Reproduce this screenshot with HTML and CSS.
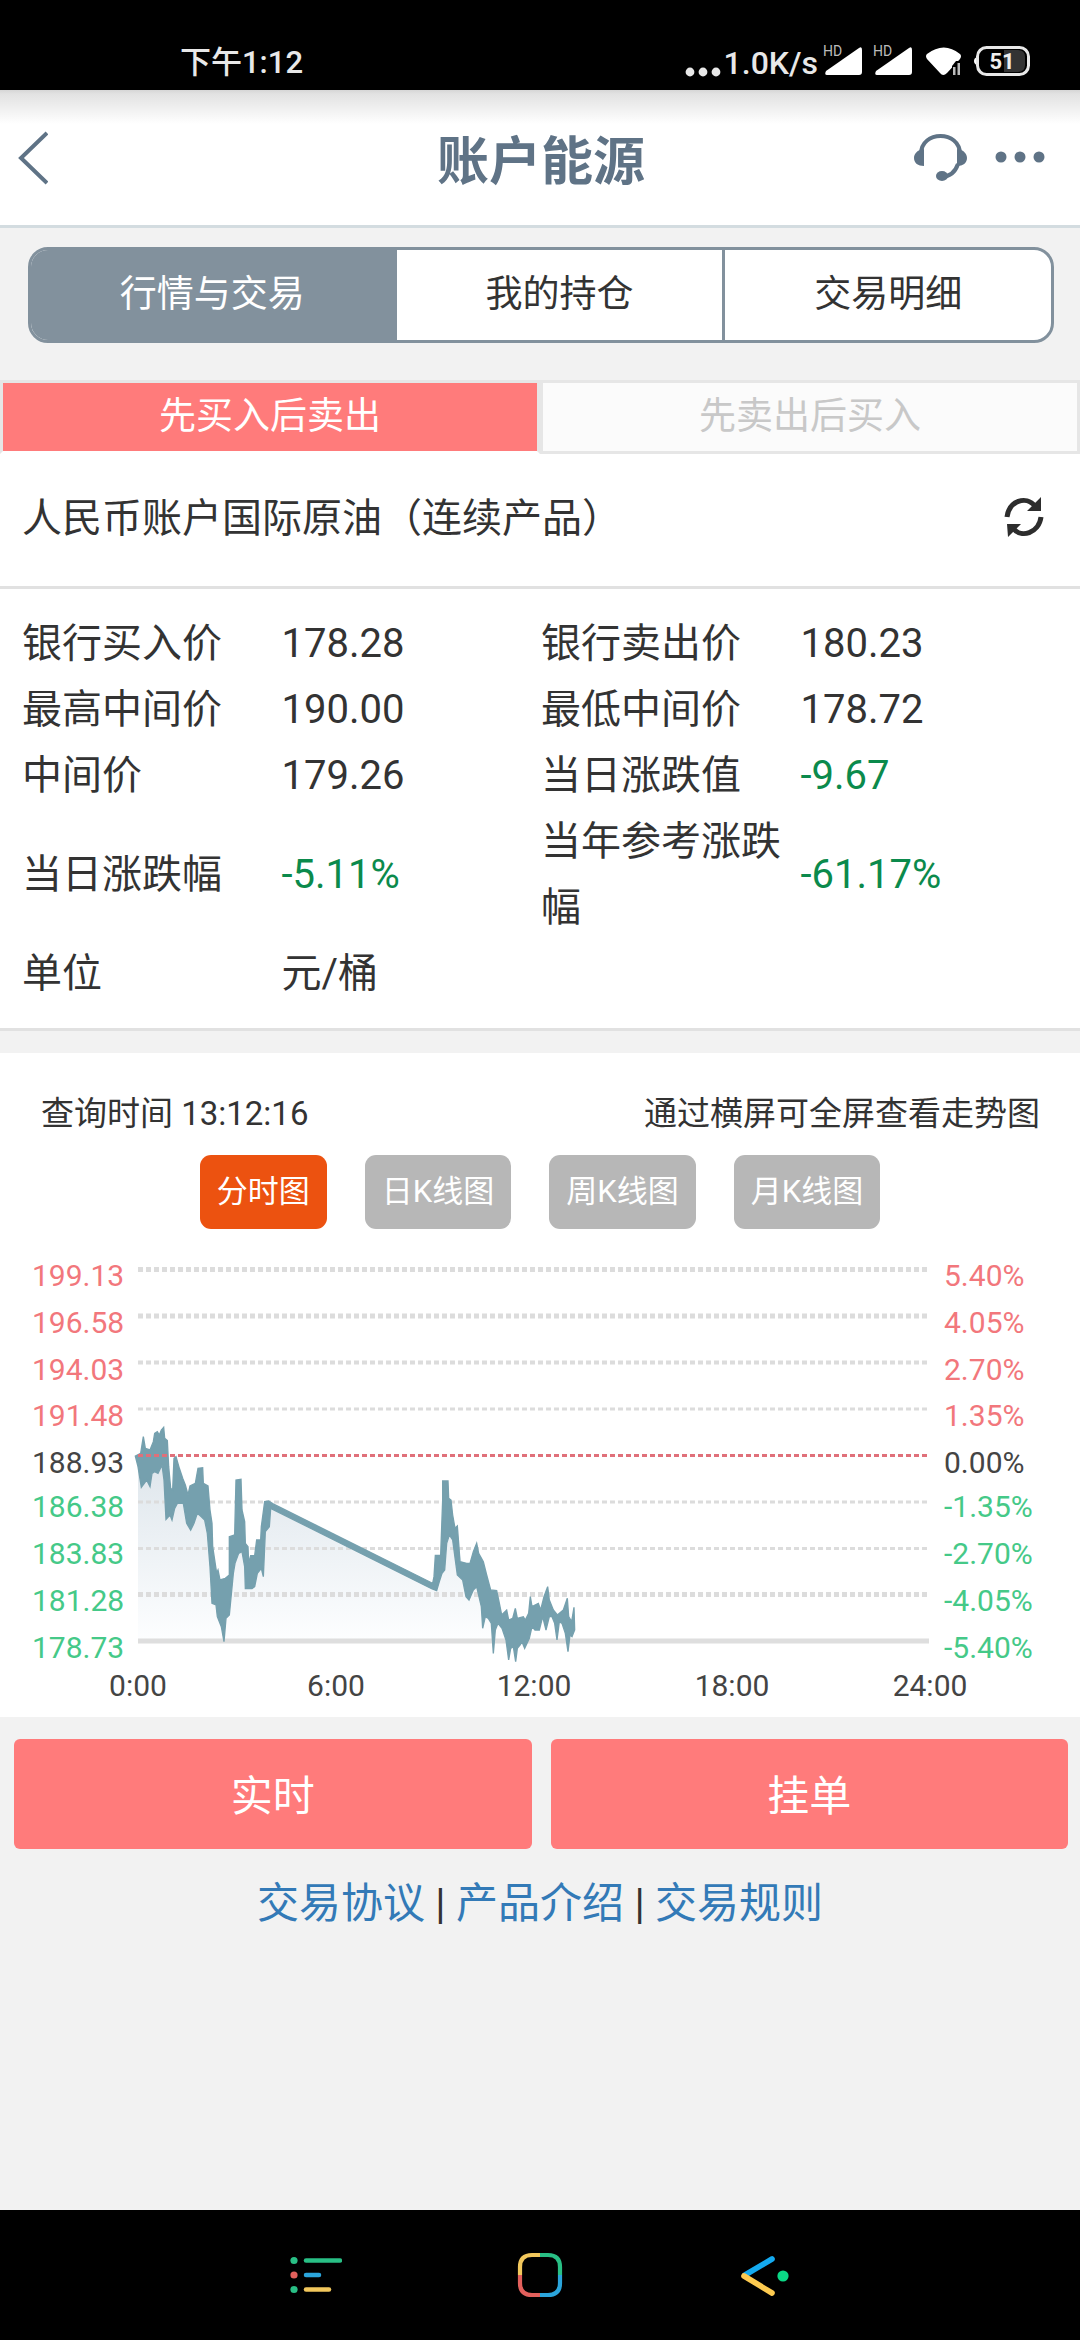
FILE: index.html
```html
<!DOCTYPE html>
<html lang="zh-CN">
<head>
<meta charset="utf-8">
<meta name="viewport" content="width=device-width, initial-scale=1">
<title>账户能源</title>
<link rel="stylesheet" href="styles.css">
</head>
<body>
<div class="status-bar">
  <span class="clock">下午1:12</span>
  <div class="status-right">
    <svg class="net-dots" width="28" height="40" viewBox="0 0 28 40"><circle cx="5" cy="32" r="4.4"/><circle cx="18" cy="32" r="4.4"/><circle cx="31" cy="32" r="4.4"/></svg>
    <span class="speed">1.0K/s</span>
    <svg class="status-icons" width="208" height="40" viewBox="822 40 208 40">
      <text x="822" y="56" class="hd">HD</text>
      <path d="M826 75h32q3 0 3-3V50q0-4-3-2L825 71q-2 4 1 4z"/>
      <text x="872" y="56" class="hd">HD</text>
      <path d="M876 75h32q3 0 3-3V50q0-4-3-2L875 71q-2 4 1 4z"/>
      <path d="M926 54q17-13 33 0q2 2 0 5L946 73q-4 4-7 0L926 59q-2-3 0-5z"/>
      <path d="M951 66l4-5h5v15h-9z" class="cut"/>
      <path d="M952 67h2.500v8h-2.500zM956.500 63h2.500v12h-2.500z" class="dim"/>
      <path d="M976 57q-3 1-3 4t3 4z"/>
      <rect x="976.500" y="47.500" width="51" height="27" rx="9" class="battery"/>
      <path d="M1003 50h14q7 0 7 7v8q0 7-7 7h-14z" class="charge"/>
      <text x="1001" y="69" class="level" text-anchor="middle">51</text>
    </svg>
  </div>
</div>

<header class="app-header">
  <button class="icon-button" aria-label="返回"><svg width="48" height="60" viewBox="0 0 48 60"><path d="M47 5L21 30l26 25"/></svg></button>
  <h1>账户能源</h1>
  <div class="header-tools">
    <button class="icon-button" aria-label="客服"><svg width="56" height="52" viewBox="910 134 56 52">
      <path class="band" d="M919 156c0-24 39-24 39 0M956 166q-4 12-16 13"/>
      <path class="solid" d="M922 151v17c-6 0-10-3-10-8c0-4 3-7 6-8zM955 151v17c6 0 10-3 10-8c0-4-3-7-6-8z"/>
      <ellipse class="solid" cx="940" cy="178" rx="6" ry="5"/>
    </svg></button>
    <button class="icon-button" aria-label="更多"><svg width="52" height="52" viewBox="992 131 52 52"><g class="solid"><circle cx="999" cy="156" r="5.500"/><circle cx="1018" cy="156" r="5.500"/><circle cx="1037" cy="156" r="5.500"/></g></svg></button>
  </div>
</header>

<main>
  <nav class="segments">
    <button class="segment active">行情与交易</button>
    <button class="segment">我的持仓</button>
    <button class="segment">交易明细</button>
  </nav>

  <div class="directions">
    <button class="direction active">先买入后卖出</button>
    <button class="direction">先卖出后买入</button>
  </div>

  <section class="product">
    <h2>人民币账户国际原油（连续产品）</h2>
    <button class="icon-button refresh" aria-label="刷新"><svg width="40" height="40" viewBox="1003 496 40 40">
      <path class="arc" d="M1006 516C1008 500 1025 494 1034 505M1040 516C1038 532 1020 538 1012 527"/>
      <path class="tip" d="M1040 496v14h-14zM1006 523h14l-13 13z"/>
    </svg></button>
  </section>

  <section class="quote">
    <table>
      <tbody>
        <tr><th>银行买入价</th><td>178.28</td><th>银行卖出价</th><td>180.23</td></tr>
        <tr><th>最高中间价</th><td>190.00</td><th>最低中间价</th><td>178.72</td></tr>
        <tr><th>中间价</th><td>179.26</td><th>当日涨跌值</th><td class="down">-9.67</td></tr>
        <tr><th>当日涨跌幅</th><td class="down">-5.11%</td><th>当年参考涨跌幅</th><td class="down">-61.17%</td></tr>
        <tr><th>单位</th><td>元/桶</td><th></th><td></td></tr>
      </tbody>
    </table>
  </section>

  <section class="trend">
    <div class="trend-info"><span>查询时间 13:12:16</span><span>通过横屏可全屏查看走势图</span></div>
    <div class="periods">
      <button class="period active">分时图</button>
      <button class="period">日K线图</button>
      <button class="period">周K线图</button>
      <button class="period">月K线图</button>
    </div>
    <svg class="chart" viewBox="0 1240 1080 477" role="img" aria-label="分时走势图">
      <defs><linearGradient id="fade" x1="0" y1="0" x2="0" y2="1"><stop offset="0" stop-color="#dde5eb"/><stop offset="1" stop-color="#fdfeff"/></linearGradient></defs>
      <path class="fill" transform="translate(120 1400) scale(.33333)" fill="url(#fade)" d="M54 170L130 160L150 300L190 270L212 340L244 300L270 420L290 580L312 660L340 450L356 400L388 540L430 460L448 318L935 558L966 500L982 350L1010 430L1046 560L1070 500L1110 620L1180 700L1180 722H54z"/>
      <g class="grid">
        <path class="w5" d="M138 1269.500H929M138 1316H929M138 1594.500H929"/>
        <path class="w4" d="M138 1362.500H929"/>
        <path class="w3" d="M138 1409H929M138 1502H929M138 1548.500H929"/>
      </g>
      <path class="axis" d="M138 1641H929"/>
      <g class="series" transform="translate(120 1400) scale(.33333)">
        <path d="M46 168L62 160L70 110L76 145L90 150L100 125L104 100L112 95L118 105L124 90L131 82L134 115L142 122L146 200L152 265L158 270L162 175L168 170L178 205L188 235L196 255L204 285L210 258L226 250L234 205L248 203L250 250L264 258L270 330L276 370L278 440L290 520L294 510L300 540L316 535L328 525V410L344 405L348 240L363 238L366 330L374 365L376 430L384 440L386 490L392 467L404 467L410 420L422 420L424 380L434 305L446 303L458 311L942 552L938 550L942 530L946 466H962L968 300V243H984L986 295L993 300L998 345L1005 385L1012 378L1016 430L1020 485L1040 490H1050L1060 455L1070 430L1076 460L1090 485L1100 525L1112 570L1130 572L1136 600L1145 645L1160 630L1166 660L1178 655L1186 625L1192 655L1210 650L1216 660L1226 640L1231 590L1236 620L1255 610L1262 630L1272 590L1283 560L1288 600L1300 630L1312 645L1330 630L1342 595L1346 650L1355 665L1362 622L1364 690L1356 710L1350 705L1344 755L1336 700L1326 670L1318 665L1311 720L1304 670L1296 650H1288L1278 690L1268 650L1258 690H1245L1236 680L1228 715L1214 745L1206 725L1200 735L1192 745L1187 785L1180 740L1172 745L1166 780L1158 720L1146 685L1134 670L1126 690L1120 760L1114 670L1105 655L1096 650L1088 685L1084 620L1070 560L1060 570L1047 600L1038 590L1028 540L1012 525L1006 480L998 420L988 405L980 430L974 510L966 520L958 545L950 572L935 566L452 325L448 380L436 395L430 530L424 505L412 520L404 560L396 566H376L374 500L366 455L356 460L345 490L340 520L328 645L318 655L312 725L304 680L292 650L288 615L276 610L270 500L262 400L254 360L244 350L232 340L222 370L212 390L200 370L190 310H172L164 325L156 360L150 345L138 358L132 240L126 195L114 220L104 215L96 220L90 260L80 240L64 262L54 200z"/>
      </g>
      <path class="base" d="M138 1455.500H929"/>
      <g class="labels up">
        <text x="32" y="1286">199.13</text><text x="32" y="1333">196.58</text><text x="32" y="1380">194.03</text><text x="32" y="1426">191.48</text>
        <text x="944" y="1286">5.40%</text><text x="944" y="1333">4.05%</text><text x="944" y="1380">2.70%</text><text x="944" y="1426">1.35%</text>
      </g>
      <g class="labels">
        <text x="32" y="1473">188.93</text><text x="944" y="1473">0.00%</text>
      </g>
      <g class="labels low">
        <text x="32" y="1517">186.38</text><text x="32" y="1564">183.83</text><text x="32" y="1611">181.28</text><text x="32" y="1658">178.73</text>
        <text x="944" y="1517">-1.35%</text><text x="944" y="1564">-2.70%</text><text x="944" y="1611">-4.05%</text><text x="944" y="1658">-5.40%</text>
      </g>
      <g class="labels" text-anchor="middle">
        <text x="138" y="1696">0:00</text><text x="336" y="1696">6:00</text><text x="534" y="1696">12:00</text><text x="732" y="1696">18:00</text><text x="930" y="1696">24:00</text>
      </g>
    </svg>
  </section>

  <div class="actions">
    <button class="action">实时</button>
    <button class="action">挂单</button>
  </div>
  <p class="links"><a href="#agreement">交易协议</a> | <a href="#intro">产品介绍</a> | <a href="#rules">交易规则</a></p>
</main>

<nav class="system-nav">
  <button class="icon-button" aria-label="最近任务"><svg width="52" height="52" viewBox="290 2249 52 52"><g fill="#29bf85"><circle cx="294" cy="2260.500" r="3.600"/><circle cx="294" cy="2289.500" r="3.600"/></g><circle cx="294" cy="2275" r="3.600" fill="#e2605c"/><g fill="none" stroke-width="4.500" stroke-linecap="round"><path stroke="#29bf85" d="M306 2260.500h34"/><path stroke="#2ba5dc" d="M306 2275h13"/><path stroke="#f2c75c" d="M306 2289.500h23"/></g></svg></button>
  <button class="icon-button" aria-label="主屏幕"><svg width="52" height="52" viewBox="514 2249 52 52"><g fill="none" stroke-width="4.200"><path stroke="#f2c75c" d="M520 2275v-8q0-12 12-12h8"/><path stroke="#29bf85" d="M540 2255h8q12 0 12 12v8"/><path stroke="#2ba5dc" d="M560 2275v8q0 12-12 12h-8"/><path stroke="#e2605c" d="M540 2295h-8q-12 0-12-12v-8"/></g></svg></button>
  <button class="icon-button" aria-label="返回上一页"><svg width="52" height="52" viewBox="738 2249 52 52"><g fill="none" stroke-width="5.600" stroke-linecap="round"><path stroke="#14aaf0" d="M745 2275l27-16"/><path stroke="#fdca50" d="M744 2276l28 17"/></g><circle cx="783" cy="2276" r="5.600" fill="#0bd886"/></svg></button>
</nav>
</body>
</html>
```
FILE: styles.css
```css
* { box-sizing: border-box; }

body {
  margin: 0;
  min-height: 100vh;
  display: flex;
  flex-direction: column;
  background: #f2f2f2;
  color: #333;
  font-family: Roboto, "Noto Sans CJK SC", sans-serif;
  font-size: 40px;
}

button {
  margin: 0;
  padding: 0;
  border: 0;
  background: none;
  color: inherit;
  font: inherit;
}

h1, h2, p { margin: 0; font-weight: 400; }
svg { display: block; }
.icon-button { flex: none; }

/* Phone status bar */
.status-bar {
  display: flex;
  justify-content: space-between;
  padding: 40px 49px 10px 180px;
  height: 90px;
  background: #000;
  color: #e8e8e8;
  font-weight: 500;
  line-height: 46px;
}
.clock { font-size: 31px; }
.status-right { display: flex; }
.net-dots { fill: #e8e8e8; overflow: visible; }
.speed { margin: 0 5px 0 11px; font-size: 32px; }
.status-icons { fill: #fff; }
.status-icons .hd { fill: #bbb; font-size: 14px; font-weight: 400; }
.status-icons .cut { fill: #000; }
.status-icons .dim { fill: #bbb; }
.status-icons .battery { fill: none; stroke: #e8e8e8; stroke-width: 3; }
.status-icons .charge { fill: #333; }
.status-icons .level { font-size: 22px; font-weight: 700; fill: #eee; }

/* Title bar */
.app-header {
  display: grid;
  grid-template-columns: 1fr auto 1fr;
  align-items: center;
  height: 138px;
  padding-right: 34px;
  border-bottom: 3px solid #d3dce0;
  background: linear-gradient(#d6d6d6, #e2e2e2 4px, #fff 34px);
  color: #5f7386;
}
.app-header > .icon-button { justify-self: start; }
.app-header > .icon-button svg { fill: none; stroke: #5f7386; stroke-width: 4; }
.app-header h1 { padding: 10px 0 0 36px; font-size: 52px; font-weight: 700; line-height: 76px; }
.header-tools { display: flex; gap: 26px; justify-self: end; align-items: center; }
.band { fill: none; stroke: #5f7386; stroke-width: 4; }
.solid { fill: #5f7386; }

/* Section switch */
.segments {
  display: flex;
  margin: 19px 26px 37px 28px;
  height: 96px;
  border: 3px solid #82919d;
  border-radius: 20px;
  overflow: hidden;
  background: #fff;
  font-size: 37px;
}
.segment { flex: 1 1 328px; padding-bottom: 9px; }
.segment + .segment { border-left: 3px solid #82919d; }
.segment.active { flex-basis: 362px; background: #82919d; color: #fff; }

.directions { display: grid; grid-template-columns: 1fr 1fr; background: #fff; font-size: 37px; }
.direction {
  height: 74px;
  padding-bottom: 9px;
  border: 3px solid #e6e6e6;
  background: #fbfbfb;
  color: #c8c8c8;
}
.direction.active { border-bottom-color: #fff; background: #ff7b7b; color: #fff; }

/* Product and quote */
.product {
  display: flex;
  justify-content: space-between;
  align-items: center;
  height: 135px;
  padding: 0 36px 2px 22px;
  border-bottom: 3px solid #e1e1e1;
  background: #fff;
}
.product h2 { font-size: 40px; line-height: 66px; }
.refresh { margin-bottom: 4px; }
.refresh .arc { fill: none; stroke: #2d2d2d; stroke-width: 5; }
.refresh .tip { fill: #2d2d2d; }

.quote { padding: 22px 20px 21px 22px; border-bottom: 3px solid #e1e1e1; background: #fff; }
.quote table { width: 100%; border-collapse: collapse; table-layout: fixed; }
.quote th, .quote td { padding: 0; font-weight: 400; line-height: 66px; text-align: left; vertical-align: middle; }
.quote .down { color: #0b8a4c; }

/* Trend chart */
.trend { margin-top: 22px; padding-top: 37px; background: #fff; }
.trend-info { display: flex; justify-content: space-between; padding: 0 40px 0 41px; font-size: 33px; line-height: 48px; }
.periods { display: flex; justify-content: center; gap: 38px; margin: 17px 0 11px; }
.period {
  height: 74px;
  padding: 0 17px 8px;
  border-radius: 11px;
  background: #b7b7b7;
  color: #fff;
  font-size: 31px;
}
.period.active { background: #ec5210; }

.chart { width: 100%; height: auto; }
.grid path { fill: none; stroke: #dcdcdc; stroke-dasharray: 5 3; }
.grid .w5 { stroke-width: 5; }
.grid .w4 { stroke-width: 4; }
.grid .w3 { stroke-width: 3; }
.axis { stroke: #dedede; stroke-width: 5; }
.base { stroke: #e0707a; stroke-width: 3; stroke-dasharray: 5 3; }
.series path { fill: #75a0ae; stroke: #75a0ae; stroke-width: 4; }
.labels text { fill: #444; font-size: 30px; }
.labels.up text { fill: #f2777c; }
.labels.low text { fill: #45c988; }

/* Order buttons and links */
.actions { display: grid; grid-template-columns: 1fr 1fr; gap: 19px; padding: 22px 12px 25px 14px; }
.action { height: 110px; padding-bottom: 3px; border-radius: 6px; background: #ff7b7b; color: #fff; font-size: 42px; }
.links { font-size: 42px; line-height: 60px; text-align: center; }
.links a { color: #337ab7; text-decoration: none; }

/* Phone navigation bar */
.system-nav {
  display: flex;
  justify-content: center;
  align-items: center;
  gap: 172px;
  height: 130px;
  margin-top: auto;
  background: #000;
}
```
